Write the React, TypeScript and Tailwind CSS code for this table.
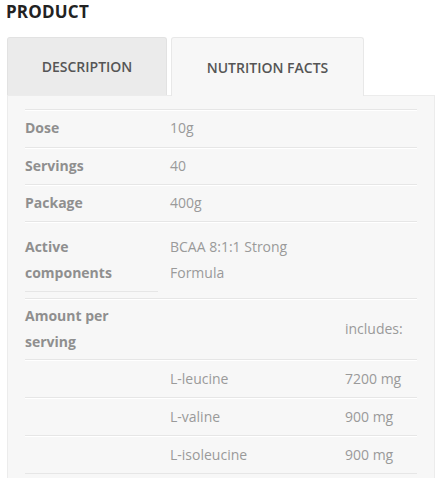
const basics = [
  { label: "Dose", value: "10g" },
  { label: "Servings", value: "40" },
  { label: "Package", value: "400g" },
];

const amounts = [
  { name: "L-leucine", amount: "7200 mg" },
  { name: "L-valine", amount: "900 mg" },
  { name: "L-isoleucine", amount: "900 mg" },
];

const line = "border-t border-[#e6e6e6] shadow-[inset_0_1px_0_#ffffff]";

export default function App() {
  return (
    <div className="w-[442px] h-[478px] overflow-hidden bg-white font-['Open_Sans',sans-serif]">
      <h2 className="pl-[6px] text-[17px] leading-[24px] font-bold tracking-[0.2px] text-[#222]">PRODUCT</h2>

      <div className="mt-[13px] mx-[7px]">
        {/* Tabs */}
        <div className="flex items-end gap-[4px]">
          <div className="w-[160px] h-[58px] flex items-center justify-center bg-[#ebebeb] border border-b-0 border-[#e2e2e2] rounded-t-[3px] text-[14px] font-semibold text-[#555]">
            DESCRIPTION
          </div>
          <div className="relative z-10 -mb-px w-[193px] h-[59px] flex items-center justify-center bg-[#f7f7f7] border border-b-0 border-[#e8e8e8] rounded-t-[3px] text-[14px] font-semibold text-[#555]">
            NUTRITION FACTS
          </div>
        </div>

        {/* Panel */}
        <div className="h-[400px] bg-[#f7f7f7] border border-[#ececec] pl-[17px] pr-[17px] pt-[13px] text-[14px] text-[#9a9a9a]">
          {basics.map((row, i) => (
            <div key={row.label} className={`${line} flex ${i === 0 ? "pt-[6px] pb-[7px]" : "py-[6px]"} leading-[24px]`}>
              <div className="w-[145px] font-bold text-[#8f8f8f]">{row.label}</div>
              <div>{row.value}</div>
            </div>
          ))}

          {/* Active components */}
          <div className={`${line} flex pb-[6px]`}>
            <div className="w-[133px] mr-[12px] pt-[12px] pb-[5px] leading-[26px] font-bold text-[#8f8f8f] border-b border-[#e6e6e6]">
              Active
              <br />
              components
            </div>
            <div className="pt-[12px] leading-[26px]">
              BCAA 8:1:1 Strong
              <br />
              Formula
            </div>
          </div>

          {/* Amount per serving */}
          <div className={`${line} flex items-center py-[4px] leading-[26px]`}>
            <div className="w-[320px] font-bold text-[#8f8f8f]">
              Amount per
              <br />
              serving
            </div>
            <div>includes:</div>
          </div>

          {amounts.map((row) => (
            <div key={row.name} className={`${line} flex py-[6px] leading-[25px]`}>
              <div className="w-[145px]" />
              <div className="w-[175px]">{row.name}</div>
              <div>{row.amount}</div>
            </div>
          ))}
          <div className={line} />
        </div>
      </div>
    </div>
  );
}
